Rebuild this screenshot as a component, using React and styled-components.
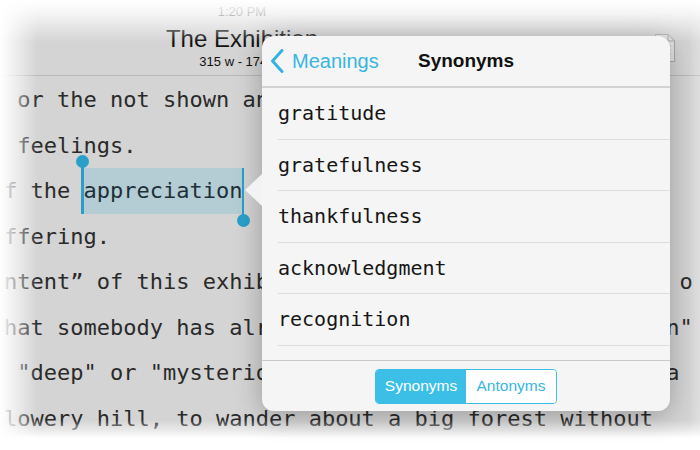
import React from 'react'
import styled, { createGlobalStyle } from 'styled-components'

const GlobalStyle = createGlobalStyle`
  html, body {
    margin: 0;
    padding: 0;
    background: #fff;
  }
  body {
    width: 700px;
    height: 450px;
    overflow: hidden;
    font-family: 'Liberation Sans', Arial, sans-serif;
  }
`

const lines = [
   ' or the not shown and not written in the text,',
   ' feelings.',
   null,
   'ffering.',
   'ntent” of this exhibition is what you do not feel, o',
   'hat somebody has already understood what they "seen"',
   ' "deep" or "mysterious" meanings: it is more like a',
   'lowery hill, to wander about a big forest without',
]

const synonyms = ['gratitude', 'gratefulness', 'thankfulness', 'acknowledgment', 'recognition']

const DocIcon = () => (
   <svg width="22" height="30" viewBox="0 0 22 30">
      <path d="M1.5 1.5 H14 L20.5 8 V28.5 H1.5 Z" fill="#e4e4e4" stroke="#a9a9a9" strokeWidth="1" />
      <path d="M14 1.5 V8 H20.5" fill="none" stroke="#a9a9a9" strokeWidth="1" />
      <path d="M5 13 H17 M5 17 H17 M5 21 H17" stroke="#b8b8b8" strokeWidth="1" />
   </svg>
)

const Chevron = () => (
   <svg width="14" height="24" viewBox="0 0 14 24">
      <path d="M12 1.5 L2.5 12 L12 22.5" fill="none" stroke="#33b3e0" strokeWidth="3" strokeLinecap="round" strokeLinejoin="round" />
   </svg>
)

export default function App() {
   return (
      <>
         <GlobalStyle />
         <S.Stage>
            <S.Screen>
               <S.Header>
                  <S.TitleBlock>
                     <S.Status>1:20 PM</S.Status>
                     <S.Title>The Exhibition</S.Title>
                     <S.Subtitle>315 w - 1745 c</S.Subtitle>
                  </S.TitleBlock>
                  <S.IconSlot>
                     <DocIcon />
                  </S.IconSlot>
               </S.Header>
               <S.Body>
                  {lines.map((text, i) =>
                     text === null ? (
                        <S.Line key={i}>
                           {'f the '}
                           <S.Selection>
                              appreciation
                              <S.Handle $side="start" />
                              <S.Handle $side="end" />
                           </S.Selection>
                           {' of the visitor\'s own'}
                        </S.Line>
                     ) : (
                        <S.Line key={i}>{text}</S.Line>
                     )
                  )}
               </S.Body>
            </S.Screen>

            <S.Popover>
               <S.PopHeader>
                  <S.Back>
                     <Chevron />
                     <span>Meanings</span>
                  </S.Back>
                  <S.PopTitle>Synonyms</S.PopTitle>
                  <span />
               </S.PopHeader>
               <S.List>
                  {synonyms.map(word => (
                     <S.Row key={word}>{word}</S.Row>
                  ))}
               </S.List>
               <S.Footer>
                  <S.Segmented>
                     <S.Segment $active>Synonyms</S.Segment>
                     <S.Segment>Antonyms</S.Segment>
                  </S.Segmented>
               </S.Footer>
            </S.Popover>
         </S.Stage>
      </>
   )
}

const S = {
   Stage: styled.div`
      position: relative;
      width: 700px;
      height: 450px;
      overflow: hidden;
      background: #fff;
   `,
   Screen: styled.div`
      position: relative;
      height: 450px;
      background: #d4d4d4;
      &::after {
         content: '';
         position: absolute;
         inset: 0;
         z-index: 1;
         pointer-events: none;
         background:
            linear-gradient(to right, #fff 0, rgba(255, 255, 255, 0.75) 10px, rgba(255, 255, 255, 0) 38px),
            linear-gradient(to bottom, #fff 0, rgba(255, 255, 255, 0.8) 12px, rgba(255, 255, 255, 0) 42px),
            linear-gradient(to top, #fff 0, #fff 12px, rgba(255, 255, 255, 0.55) 19px, rgba(255, 255, 255, 0) 30px),
            linear-gradient(to left, rgba(255, 255, 255, 0.25) 0, rgba(255, 255, 255, 0) 12px);
      }
   `,
   Header: styled.div`
      display: grid;
      grid-template-columns: 484px 1fr;
      align-items: start;
      height: 71px;
      padding-top: 4px;
      border-bottom: 1px solid #b9b9b9;
   `,
   TitleBlock: styled.div`
      display: flex;
      flex-direction: column;
      align-items: center;
   `,
   Status: styled.div`
      font-size: 13px;
      line-height: 16px;
      color: #222;
   `,
   Title: styled.div`
      margin-top: 5px;
      font-size: 24px;
      line-height: 28px;
      color: #111;
   `,
   Subtitle: styled.div`
      margin-top: 1px;
      font-size: 13px;
      line-height: 16px;
      color: #111;
   `,
   IconSlot: styled.div`
      justify-self: end;
      margin: 29px 24px 0 0;
      line-height: 0;
   `,
   Body: styled.div`
      padding: 1px 0 0 4px;
      font-family: 'DejaVu Sans Mono', 'Liberation Mono', monospace;
      font-size: 22px;
      color: #2a2a2a;
   `,
   Line: styled.div`
      height: 45.5px;
      line-height: 45.5px;
      white-space: pre;
   `,
   Selection: styled.span`
      position: relative;
      display: inline-block;
      height: 45.5px;
      vertical-align: top;
      background: #b4cdd4;
      color: #1d3038;
   `,
   Handle: styled.span`
      position: absolute;
      width: 2.5px;
      background: #2a9fc9;
      ${({ $side }) =>
         $side === 'start'
            ? `left: -2px; top: -6.5px; bottom: 0;`
            : `left: calc(100% - 0.5px); top: 0; bottom: -7px;`}
      &::after {
         content: '';
         position: absolute;
         left: -5.3px;
         width: 13px;
         height: 13px;
         border-radius: 50%;
         background: #2a9fc9;
         ${({ $side }) => ($side === 'start' ? `top: -6.5px;` : `bottom: -6.5px;`)}
      }
   `,
   Popover: styled.div`
      position: absolute;
      z-index: 2;
      left: 262px;
      top: 36px;
      width: 408px;
      height: 375px;
      display: flex;
      flex-direction: column;
      background: #f5f5f5;
      border-radius: 12px;
      box-shadow: 0 4px 28px rgba(0, 0, 0, 0.28);
      &::before {
         content: '';
         position: absolute;
         left: -17px;
         top: 138px;
         border-right: 17px solid #f1f3f4;
         border-top: 16px solid transparent;
         border-bottom: 16px solid transparent;
      }
   `,
   PopHeader: styled.div`
      display: grid;
      grid-template-columns: 1fr auto 1fr;
      align-items: center;
      height: 50px;
      border-bottom: 2px solid #d2d2d2;
   `,
   Back: styled.div`
      display: flex;
      align-items: center;
      gap: 8px;
      padding-left: 8px;
      font-size: 20px;
      color: #38b6e2;
      svg {
         display: block;
      }
   `,
   PopTitle: styled.div`
      font-size: 19px;
      font-weight: bold;
      color: #111;
   `,
   List: styled.div`
      flex: 1;
      padding-left: 16px;
   `,
   Row: styled.div`
      height: 50.5px;
      display: flex;
      align-items: center;
      border-bottom: 1px solid #dcdcdc;
      font-family: 'DejaVu Sans Mono', 'Liberation Mono', monospace;
      font-size: 20px;
      color: #161616;
   `,
   Footer: styled.div`
      height: 50px;
      display: flex;
      align-items: center;
      justify-content: center;
      border-top: 1px solid #c9c9c9;
   `,
   Segmented: styled.div`
      display: flex;
      height: 33px;
      border: 1px solid #3bbde6;
      border-radius: 4px;
      overflow: hidden;
   `,
   Segment: styled.div`
      width: 90px;
      display: flex;
      align-items: center;
      justify-content: center;
      font-size: 15.5px;
      background: ${({ $active }) => ($active ? '#3bbfe7' : '#fff')};
      color: ${({ $active }) => ($active ? '#fff' : '#35b5e1')};
   `,
}
